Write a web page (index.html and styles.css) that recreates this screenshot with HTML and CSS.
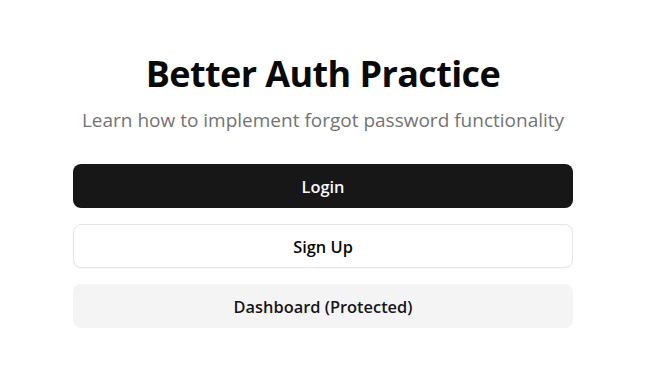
FILE: index.html
```html
<!DOCTYPE html>
<html>
<head>
<meta charset="utf-8">
<link rel="stylesheet" href="styles.css">
</head>
<body>
<main class="page">
  <div class="card">
    <h1 class="title">Better Auth Practice</h1>
    <p class="subtitle">Learn how to implement forgot password functionality</p>
    <div class="actions">
      <a class="btn btn-primary">Login</a>
      <a class="btn btn-outline">Sign Up</a>
      <a class="btn btn-secondary">Dashboard (Protected)</a>
    </div>
  </div>
</main>
</body>
</html>
```
FILE: styles.css
```css
* { box-sizing: border-box; }
html, body { margin: 0; padding: 0; background: #fff; }
body { font-family: "Open Sans", "Noto Sans", sans-serif; color: #0a0a0a; }
.page { display: flex; justify-content: center; padding: 50px 6px 0 0; }
.card { width: 500px; display: flex; flex-direction: column; align-items: center; }
.title { margin: 0; font-size: 36px; font-weight: 700; line-height: 48px; letter-spacing: -0.6px; }
.subtitle { margin: 8px 0 0; font-size: 19px; line-height: 28px; color: #737373; }
.actions { width: 100%; display: flex; flex-direction: column; gap: 16px; margin-top: 30px; }
.btn { display: flex; align-items: center; justify-content: center; height: 44px; border-radius: 8px; font-size: 16.4px; font-weight: 600; }
.btn-primary { background: #171717; color: #fafafa; }
.btn-outline { background: #fff; border: 1px solid #e5e5e5; color: #0a0a0a; box-shadow: 0 1px 2px rgba(0,0,0,0.04); }
.btn-secondary { background: #f4f4f4; color: #171717; }
```
